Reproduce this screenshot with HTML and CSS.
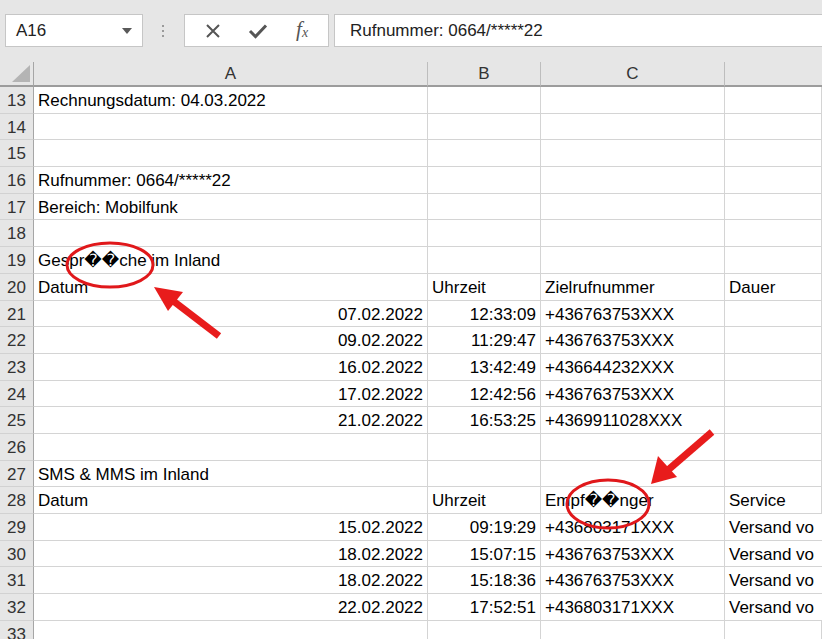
FILE: index.html
```html
<!DOCTYPE html>
<html lang="de">
<head>
    <meta charset="UTF-8">
    <title>Mappe1 - Excel</title>
    <link rel="stylesheet" href="styles.css">
</head>
<body>
    <div class="toolbar">
        <div class="namebox">
            <span>A16</span>
            <svg class="caret" width="10" height="6" viewBox="0 0 10 6"><path d="M0 0 L10 0 L5 6 Z" fill="#595959"/></svg>
        </div>
        <div class="dots"><i></i><i></i><i></i></div>
        <div class="fbuttons">
            <svg width="16" height="16" viewBox="0 0 16 16"><path d="M2 2 L14 14 M14 2 L2 14" stroke="#555" stroke-width="2" fill="none"/></svg>
            <svg width="20" height="16" viewBox="0 0 20 16"><path d="M2 8 L7.5 13.5 L18 2.5" stroke="#555" stroke-width="3" fill="none"/></svg>
            <span class="fx">f<sub>x</sub></span>
        </div>
        <div class="formula">Rufnummer: 0664/*****22</div>
    </div>

    <div class="sheet">
        <div class="corner"><svg width="18" height="17" viewBox="0 0 18 17"><path d="M18 0 L18 17 L0 17 Z" fill="#b4b4b4"/></svg></div>
        <div class="colhead">A</div>
        <div class="colhead">B</div>
        <div class="colhead">C</div>
        <div class="colhead last"></div>

        <div class="rh">13</div><div class="c">Rechnungsdatum: 04.03.2022</div><div class="c"></div><div class="c"></div><div class="c"></div>
        <div class="rh">14</div><div class="c"></div><div class="c"></div><div class="c"></div><div class="c"></div>
        <div class="rh">15</div><div class="c"></div><div class="c"></div><div class="c"></div><div class="c"></div>
        <div class="rh">16</div><div class="c">Rufnummer: 0664/*****22</div><div class="c"></div><div class="c"></div><div class="c"></div>
        <div class="rh">17</div><div class="c">Bereich: Mobilfunk</div><div class="c"></div><div class="c"></div><div class="c"></div>
        <div class="rh">18</div><div class="c"></div><div class="c"></div><div class="c"></div><div class="c"></div>
        <div class="rh">19</div><div class="c">Gespr<span class="bad">��</span>che im Inland</div><div class="c"></div><div class="c"></div><div class="c"></div>
        <div class="rh">20</div><div class="c">Datum</div><div class="c">Uhrzeit</div><div class="c">Zielrufnummer</div><div class="c">Dauer</div>
        <div class="rh">21</div><div class="c r">07.02.2022</div><div class="c r">12:33:09</div><div class="c">+436763753XXX</div><div class="c"></div>
        <div class="rh">22</div><div class="c r">09.02.2022</div><div class="c r">11:29:47</div><div class="c">+436763753XXX</div><div class="c"></div>
        <div class="rh">23</div><div class="c r">16.02.2022</div><div class="c r">13:42:49</div><div class="c">+436644232XXX</div><div class="c"></div>
        <div class="rh">24</div><div class="c r">17.02.2022</div><div class="c r">12:42:56</div><div class="c">+436763753XXX</div><div class="c"></div>
        <div class="rh">25</div><div class="c r">21.02.2022</div><div class="c r">16:53:25</div><div class="c">+4369911028XXX</div><div class="c"></div>
        <div class="rh">26</div><div class="c"></div><div class="c"></div><div class="c"></div><div class="c"></div>
        <div class="rh">27</div><div class="c">SMS &amp; MMS im Inland</div><div class="c"></div><div class="c"></div><div class="c"></div>
        <div class="rh">28</div><div class="c">Datum</div><div class="c">Uhrzeit</div><div class="c">Empf<span class="bad">��</span>nger</div><div class="c">Service</div>
        <div class="rh">29</div><div class="c r">15.02.2022</div><div class="c r">09:19:29</div><div class="c">+436803171XXX</div><div class="c clip">Versand vo</div>
        <div class="rh">30</div><div class="c r">18.02.2022</div><div class="c r">15:07:15</div><div class="c">+436763753XXX</div><div class="c clip">Versand vo</div>
        <div class="rh">31</div><div class="c r">18.02.2022</div><div class="c r">15:18:36</div><div class="c">+436763753XXX</div><div class="c clip">Versand vo</div>
        <div class="rh">32</div><div class="c r">22.02.2022</div><div class="c r">17:52:51</div><div class="c">+436803171XXX</div><div class="c clip">Versand vo</div>
        <div class="rh">33</div><div class="c"></div><div class="c"></div><div class="c"></div><div class="c"></div>
    </div>

    <!-- red markings drawn over the screenshot -->
    <svg class="marks" width="822" height="639" viewBox="0 0 822 639">
        <ellipse cx="110" cy="265" rx="43" ry="22" fill="none" stroke="#e0181b" stroke-width="3"/>
        <path d="M219 336 L172 300" stroke="#e81c1c" stroke-width="7" fill="none"/>
        <path d="M154 287 L183 292 L168 311 Z" fill="#e81c1c"/>
        <ellipse cx="608" cy="504" rx="41" ry="24" fill="none" stroke="#e0181b" stroke-width="3"/>
        <path d="M712 432 L668 470" stroke="#e81c1c" stroke-width="7" fill="none"/>
        <path d="M651 484 L658 456 L677 477 Z" fill="#e81c1c"/>
    </svg>
</body>
</html>
```

FILE: styles.css
```css
body {
    margin: 0;
    width: 822px;
    height: 639px;
    overflow: hidden;
    position: relative;
    background-color: #e6e6e6;
    font-family: "Liberation Sans", Arial, "DejaVu Sans", sans-serif;
    color: #000;
}
.toolbar {
    height: 62px;
    box-sizing: border-box;
    padding-top: 14px;
    display: flex;
    align-items: flex-start;
    background-color: #e6e6e6;
}
.namebox {
    margin-left: 5px;
    width: 138px;
    height: 33px;
    box-sizing: border-box;
    background-color: white;
    border: 1px solid #c6c6c6;
    display: flex;
    align-items: center;
    justify-content: space-between;
    padding: 0 10px 0 10px;
    font-size: 17px;
    color: #222;
}
.caret {
    margin-top: 1px;
}
.dots {
    margin-left: 17px;
    width: 6px;
    height: 33px;
    display: flex;
    flex-direction: column;
    align-items: center;
    justify-content: center;
    gap: 3px;
}
.dots i {
    width: 2px;
    height: 2px;
    background-color: #9a9a9a;
}
.fbuttons {
    margin-left: 18px;
    width: 145px;
    height: 33px;
    box-sizing: border-box;
    background-color: white;
    border: 1px solid #c6c6c6;
    display: flex;
    align-items: center;
    justify-content: space-around;
    padding: 0 6px 0 6px;
}
.fx {
    font-family: "Liberation Serif", "DejaVu Serif", serif;
    font-style: italic;
    font-size: 21px;
    color: #555;
    line-height: 1;
    margin-top: -3px;
}
.fx sub {
    font-size: 14px;
    vertical-align: -1px;
}
.formula {
    margin-left: 5px;
    flex: 1;
    height: 33px;
    box-sizing: border-box;
    background-color: white;
    border: 1px solid #c6c6c6;
    border-right: none;
    padding-left: 15px;
    font-size: 17px;
    line-height: 31px;
    color: #222;
}
.sheet {
    display: grid;
    grid-template-columns: 34px 394px 113px 184px 97px;
    grid-template-rows: 25px repeat(21, 26.7px);
    background-color: white;
}
.corner {
    background-color: #e6e6e6;
    border-right: 1px solid #a6a6a6;
    border-bottom: 2px solid #9c9c9c;
    box-sizing: border-box;
    display: flex;
    align-items: flex-end;
    justify-content: flex-end;
    padding: 0 3px 3px 0;
}
.colhead {
    background-color: #e6e6e6;
    border-right: 1px solid #bdbdbd;
    border-bottom: 2px solid #9c9c9c;
    box-sizing: border-box;
    text-align: center;
    font-size: 17px;
    line-height: 24px;
    color: #333;
}
.colhead.last {
    border-right: none;
}
.rh {
    background-color: #e6e6e6;
    border-right: 1px solid #a6a6a6;
    border-bottom: 1px solid #d2d2d2;
    box-sizing: border-box;
    text-align: center;
    font-size: 17px;
    line-height: 27px;
    color: #333;
}
.c {
    border-right: 1px solid #d4d4d4;
    border-bottom: 1px solid #d4d4d4;
    box-sizing: border-box;
    padding: 0 4px;
    font-size: 17px;
    line-height: 27px;
    white-space: nowrap;
}
.r {
    text-align: right;
}
.clip {
    overflow: hidden;
    border-right: none;
}
.bad {
    font-family: "DejaVu Sans", sans-serif;
    font-size: 17px;
}
.marks {
    position: absolute;
    left: 0;
    top: 0;
    pointer-events: none;
}
```
